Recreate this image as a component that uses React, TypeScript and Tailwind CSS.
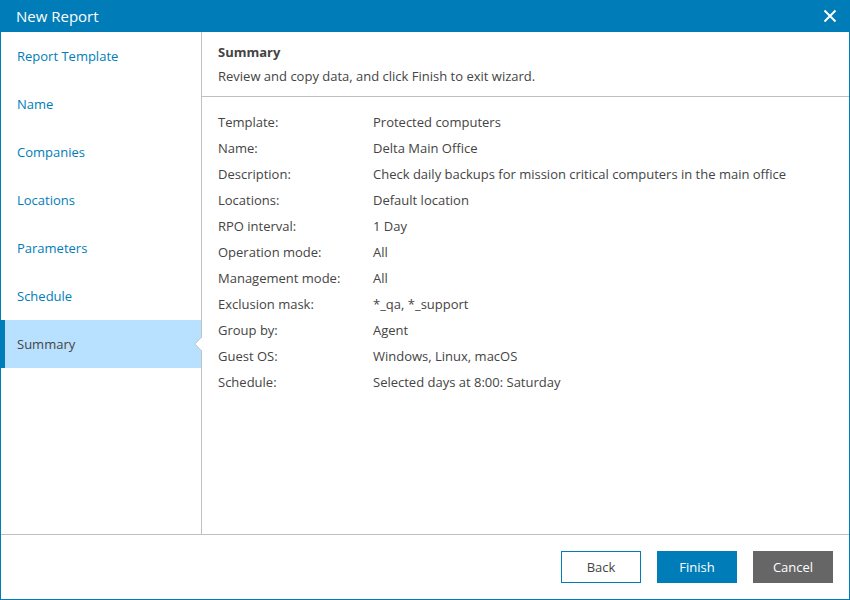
const steps = ["Report Template", "Name", "Companies", "Locations", "Parameters", "Schedule", "Summary"];

const details: [string, string][] = [
  ["Template:", "Protected computers"],
  ["Name:", "Delta Main Office"],
  ["Description:", "Check daily backups for mission critical computers in the main office"],
  ["Locations:", "Default location"],
  ["RPO interval:", "1 Day"],
  ["Operation mode:", "All"],
  ["Management mode:", "All"],
  ["Exclusion mask:", "*_qa, *_support"],
  ["Group by:", "Agent"],
  ["Guest OS:", "Windows, Linux, macOS"],
  ["Schedule:", "Selected days at 8:00: Saturday"],
];

function StepLink({ label, active }: { label: string; active: boolean }) {
  return (
    <li>
      <a
        href="#"
        aria-current={active ? "step" : undefined}
        className={
          active
            ? "relative flex h-12 items-center border-l-4 border-[#007db8] bg-[#b8e0ff] pl-3 text-[#444]"
            : "flex h-12 items-center pl-4 text-[#007db8]"
        }
      >
        {label}
        {active && (
          <svg className="absolute top-4 -right-px" width="8" height="16" viewBox="0 0 8 16" aria-hidden="true">
            <path d="M8 1 L1 8 L8 15 Z" fill="#fff" />
            <path d="M7.5 1 L1 8 L7.5 15" fill="none" stroke="#c0c8ce" strokeWidth="1" />
          </svg>
        )}
      </a>
    </li>
  );
}

export default function App() {
  return (
    <div className="flex min-h-screen flex-col border border-t-0 border-[#007db8] bg-white font-['Open_Sans',sans-serif] text-[13px] leading-6 text-[#444]">
      <header className="flex h-8 items-center justify-between bg-[#007db8] pr-3 pl-[15px] text-white">
        <h1 className="text-[15px] leading-6">New Report</h1>
        <button type="button" aria-label="Close">
          <svg width="14" height="14" viewBox="0 0 14 14" fill="none" stroke="currentColor" strokeWidth="2" aria-hidden="true">
            <path d="M1.5 1.5 L12.5 12.5 M12.5 1.5 L1.5 12.5" />
          </svg>
        </button>
      </header>

      <div className="flex flex-1">
        <nav aria-label="Wizard steps" className="w-[201px] shrink-0 border-r border-[#c0c0c0]">
          <ul>
            {steps.map((step) => (
              <StepLink key={step} label={step} active={step === "Summary"} />
            ))}
          </ul>
        </nav>

        <main className="min-w-0 flex-1">
          <div className="border-b border-[#c0c0c0] px-4 py-2">
            <h2 className="font-bold">Summary</h2>
            <p>Review and copy data, and click Finish to exit wizard.</p>
          </div>
          <dl className="px-4 py-3 leading-[26px]">
            {details.map(([term, value]) => (
              <div key={term} className="flex">
                <dt className="w-[155px] shrink-0">{term}</dt>
                <dd>{value}</dd>
              </div>
            ))}
          </dl>
        </main>
      </div>

      <footer className="flex justify-end gap-4 border-t border-[#c0c0c0] p-4">
        <button type="button" className="h-8 w-20 border border-[#007db8] bg-white">
          Back
        </button>
        <button type="button" className="h-8 w-20 bg-[#007db8] text-white">
          Finish
        </button>
        <button type="button" className="h-8 w-20 bg-[#666] text-white">
          Cancel
        </button>
      </footer>
    </div>
  );
}
